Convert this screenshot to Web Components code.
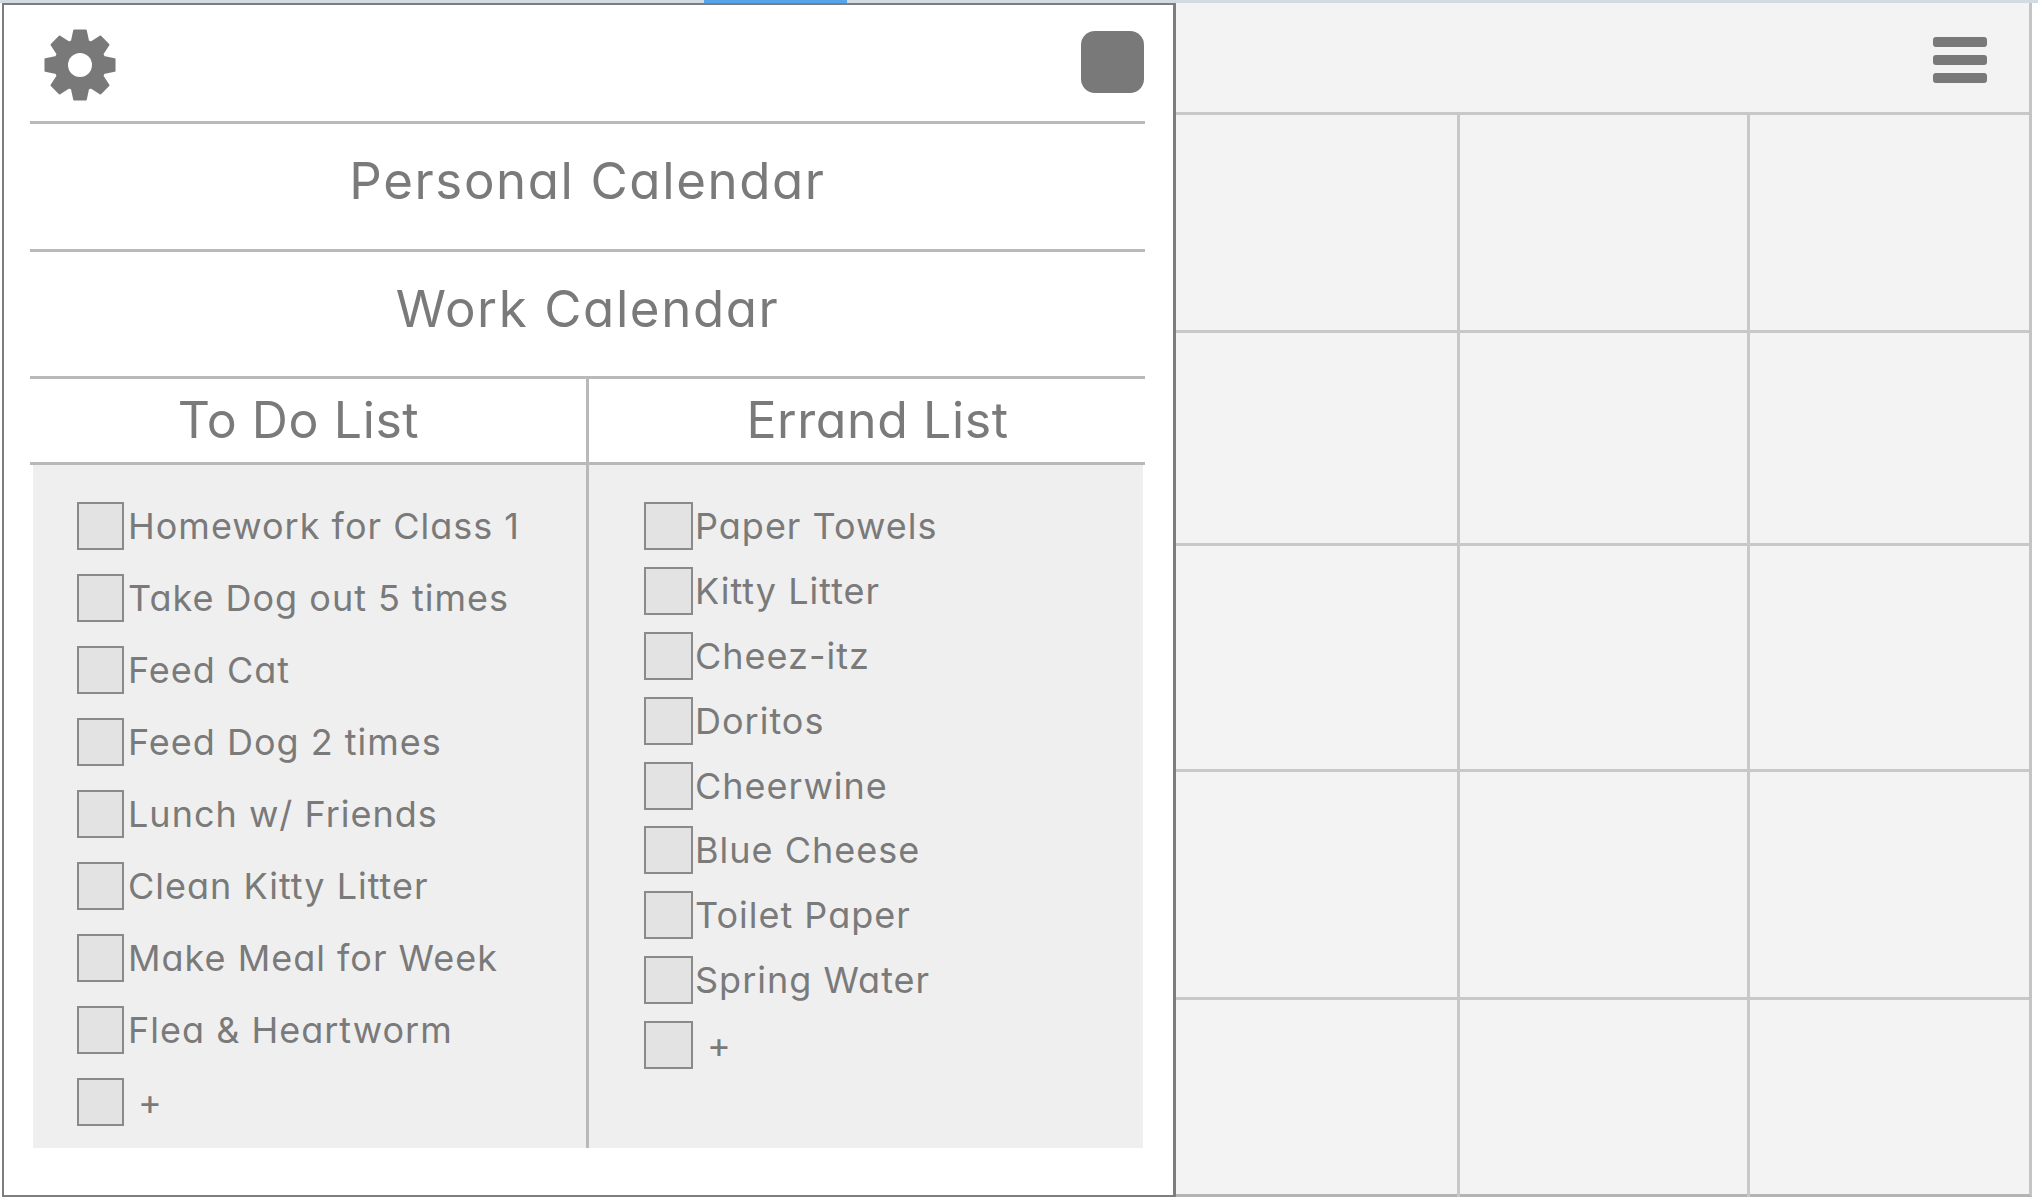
<!DOCTYPE html>
<html>
<head>
<meta charset="utf-8">
<style>
  html, body { margin: 0; padding: 0; background: #fff; }
  body { width: 2038px; height: 1197px; overflow: hidden; font-family: "Inter", "Liberation Sans", sans-serif; font-feature-settings: "cv11" 1; color: #7a7a7a; }
</style>
</head>
<body>
<planner-app>
  <side-panel slot="panel">
    <panel-row>Personal Calendar</panel-row>
    <panel-row>Work Calendar</panel-row>
    <check-list slot="todo" heading="To Do List" style="--pitch: 72px; --box-w: 47px; --box-gap: 4px; --pad-left: 44px; --head-pad: 0 19px 2px 0; --line: 0px; --body-margin: 0 0 0 3px;">
      <check-item>Homework for Class 1</check-item>
      <check-item>Take Dog out 5 times</check-item>
      <check-item>Feed Cat</check-item>
      <check-item>Feed Dog 2 times</check-item>
      <check-item>Lunch w/ Friends</check-item>
      <check-item>Clean Kitty Litter</check-item>
      <check-item>Make Meal for Week</check-item>
      <check-item>Flea &amp; Heartworm</check-item>
      <check-item add>+</check-item>
    </check-list>
    <check-list slot="errand" heading="Errand List" style="--pitch: 64.9px; --box-w: 49px; --box-gap: 2px; --pad-left: 55px; --head-pad: 0 0 2px 21px; --line: 3px; --body-margin: 0 2px 0 0;">
      <check-item>Paper Towels</check-item>
      <check-item>Kitty Litter</check-item>
      <check-item>Cheez-itz</check-item>
      <check-item>Doritos</check-item>
      <check-item>Cheerwine</check-item>
      <check-item>Blue Cheese</check-item>
      <check-item>Toilet Paper</check-item>
      <check-item>Spring Water</check-item>
      <check-item add>+</check-item>
    </check-list>
  </side-panel>
  <calendar-grid slot="calendar"></calendar-grid>
</planner-app>

<script>
class PlannerApp extends HTMLElement {
  constructor() {
    super();
    this.attachShadow({ mode: 'open' }).innerHTML = `
      <style>
        :host { display: block; width: 2038px; height: 1197px; position: relative; }
        .strip { height: 3px; background: #d3dbe2; }
        .tab { position: absolute; left: 704px; top: 0; width: 143px; height: 3px; background: #55a5ea; }
        .main { display: flex; height: 1194px; padding-left: 2px; }
      </style>
      <div class="strip"></div>
      <div class="tab"></div>
      <div class="main">
        <slot name="panel"></slot>
        <slot name="calendar"></slot>
      </div>`;
  }
}

// eight toothed gear, centred on 0,0
function gearPoints() {
  const pts = [];
  const at = (r, deg) => {
    const a = deg * Math.PI / 180;
    return (r * Math.cos(a)).toFixed(2) + ',' + (r * Math.sin(a)).toFixed(2);
  };
  for (let i = 0; i < 8; i++) {
    const t = i * 45;
    pts.push(at(25, t - 19), at(35, t - 9.5), at(35, t + 9.5), at(25, t + 19));
  }
  return pts.join(' ');
}

class SidePanel extends HTMLElement {
  constructor() {
    super();
    this.attachShadow({ mode: 'open' }).innerHTML = `
      <style>
        :host { display: block; box-sizing: border-box; width: 1174px; height: 1194px; flex: none; background: #fff; border: 2px solid #7d7d7d; border-right-width: 3px; padding: 0 28px 0 26px; }
        .top { display: flex; justify-content: space-between; height: 119px; box-sizing: border-box; padding: 20px 1px 0 10px; border-bottom: 3px solid #b9b9b9; }
        .gear { width: 80px; height: 80px; }
        .stop { width: 63px; height: 62px; margin-top: 6px; border-radius: 14px; background: #797979; }
        .lists { display: grid; grid-template-columns: 556px 559px; }
      </style>
      <div class="top">
        <svg class="gear" viewBox="-40 -40 80 80">
          <polygon points="${gearPoints()}" fill="#797979" stroke="#797979" stroke-width="2" stroke-linejoin="round"/>
          <circle r="12" fill="#fff"/>
        </svg>
        <div class="stop"></div>
      </div>
      <slot></slot>
      <div class="lists">
        <slot name="todo"></slot>
        <slot name="errand"></slot>
      </div>`;
  }
}

class PanelRow extends HTMLElement {
  constructor() {
    super();
    this.attachShadow({ mode: 'open' }).innerHTML = `
      <style>
        :host { display: flex; align-items: center; justify-content: center; box-sizing: border-box; height: 127.5px; padding-bottom: 11px; border-bottom: 3px solid #b9b9b9; font-size: 51px; letter-spacing: 1.6px; }
      </style>
      <slot></slot>`;
  }
}

class CheckList extends HTMLElement {
  constructor() {
    super();
    this.attachShadow({ mode: 'open' }).innerHTML = `
      <style>
        :host { display: block; }
        .head { display: flex; align-items: center; justify-content: center; box-sizing: border-box; height: 86px; padding: var(--head-pad); border-bottom: 3px solid #b9b9b9; border-left: var(--line) solid #b9b9b9; font-size: 50px; letter-spacing: 0.6px; }
        .rail { height: 683px; border-left: var(--line) solid #b9b9b9; }
        .body { box-sizing: border-box; height: 100%; margin: var(--body-margin); background: #efefef; padding: 37px 0 0 var(--pad-left); }
      </style>
      <div class="head"></div>
      <div class="rail"><div class="body"><slot></slot></div></div>`;
  }
  connectedCallback() {
    this.shadowRoot.querySelector('.head').textContent = this.getAttribute('heading');
  }
}

class CheckItem extends HTMLElement {
  constructor() {
    super();
    this.attachShadow({ mode: 'open' }).innerHTML = `
      <style>
        :host { display: flex; align-items: flex-start; height: var(--pitch); font-size: 36px; line-height: 49px; letter-spacing: 1px; }
        .box { box-sizing: border-box; width: var(--box-w); height: 48px; flex: none; background: #e3e3e3; border: 2px solid #8a8a8a; margin-right: var(--box-gap); }
        :host([add]) .box { margin-right: 14px; }
      </style>
      <div class="box"></div><slot></slot>`;
  }
}

class CalendarGrid extends HTMLElement {
  constructor() {
    super();
    const cells = Array.from({ length: 15 }, () => '<div class="cell"></div>').join('');
    this.attachShadow({ mode: 'open' }).innerHTML = `
      <style>
        :host { display: block; box-sizing: border-box; width: 856px; height: 1194px; flex: none; background: #f3f3f3; border-right: 3px solid #c4c4c4; border-bottom: 3px solid #b4b4b4; }
        .bar { display: flex; justify-content: flex-end; box-sizing: border-box; height: 112px; padding: 34px 42px 0 0; border-bottom: 3px solid #c8c8c8; }
        .menu { display: flex; flex-direction: column; gap: 8px; width: 54px; }
        .menu i { display: block; height: 10px; border-radius: 3px; background: #797979; }
        .cells { display: grid; grid-template-columns: 284px 290px 279px; grid-template-rows: 218px 213px 226px 228px 197px; }
        .cell { border-bottom: 3px solid #c8c8c8; border-right: 3px solid #c8c8c8; }
        .cell:nth-child(3n) { border-right: 0; }
        .cell:nth-last-child(-n+3) { border-bottom: 0; }
      </style>
      <div class="bar"><div class="menu"><i></i><i></i><i></i></div></div>
      <div class="cells">${cells}</div>`;
  }
}

customElements.define('planner-app', PlannerApp);
customElements.define('side-panel', SidePanel);
customElements.define('panel-row', PanelRow);
customElements.define('check-list', CheckList);
customElements.define('check-item', CheckItem);
customElements.define('calendar-grid', CalendarGrid);
</script>
</body>
</html>
